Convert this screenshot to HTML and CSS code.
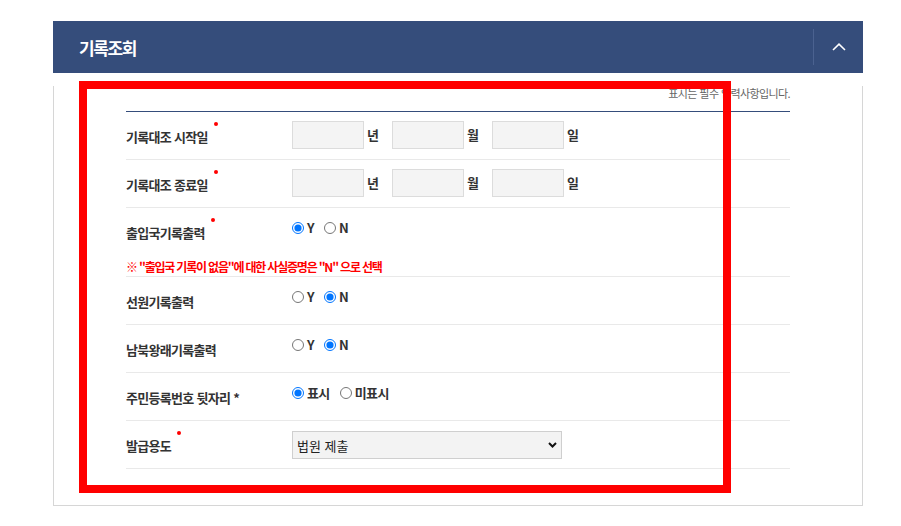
FILE: index.html
```html
<!DOCTYPE html>
<html lang="ko">
<head>
    <meta charset="UTF-8">
    <meta name="viewport" content="width=device-width, initial-scale=1.0">
    <title>기록조회</title>
    <link rel="stylesheet" href="styles.css">
</head>
<body>
    <div class="panel">
        <div class="panel-head">
            <h2>기록조회</h2>
            <button class="toggle" type="button">
                <svg width="14" height="8" viewBox="0 0 14 8"><polyline points="1,7 7,1.2 13,7" fill="none" stroke="#fff" stroke-width="1.6"/></svg>
            </button>
        </div>

        <div class="panel-body">
            <p class="guide">표시는 필수 입력사항입니다.</p>

            <div class="form">
                <div class="row">
                    <div class="label">기록대조 시작일<span class="req"></span></div>
                    <div class="value date">
                        <input type="text"><span class="unit">년</span>
                        <input type="text"><span class="unit">월</span>
                        <input type="text"><span class="unit">일</span>
                    </div>
                </div>
                <div class="row">
                    <div class="label">기록대조 종료일<span class="req"></span></div>
                    <div class="value date">
                        <input type="text"><span class="unit">년</span>
                        <input type="text"><span class="unit">월</span>
                        <input type="text"><span class="unit">일</span>
                    </div>
                </div>
                <div class="row row-note">
                    <div class="line">
                        <div class="label">출입국기록출력<span class="req"></span></div>
                        <div class="value choice">
                            <label><input type="radio" name="immi" checked>Y</label>
                            <label><input type="radio" name="immi">N</label>
                        </div>
                    </div>
                    <p class="note">※ "출입국 기록이 없음"에 대한 사실증명은 "N" 으로 선택</p>
                </div>
                <div class="row">
                    <div class="label">선원기록출력</div>
                    <div class="value choice">
                        <label><input type="radio" name="crew">Y</label>
                        <label><input type="radio" name="crew" checked>N</label>
                    </div>
                </div>
                <div class="row">
                    <div class="label">남북왕래기록출력</div>
                    <div class="value choice">
                        <label><input type="radio" name="nk">Y</label>
                        <label><input type="radio" name="nk" checked>N</label>
                    </div>
                </div>
                <div class="row">
                    <div class="label">주민등록번호 뒷자리 *</div>
                    <div class="value choice">
                        <label><input type="radio" name="rrn" checked>표시</label>
                        <label><input type="radio" name="rrn">미표시</label>
                    </div>
                </div>
                <div class="row">
                    <div class="label">발급용도<span class="req"></span></div>
                    <div class="value select-wrap">
                        <select>
                            <option>법원 제출</option>
                        </select>
                        <svg class="arrow" width="9" height="6" viewBox="0 0 9 6"><polyline points="1,1 4.5,4.5 8,1" fill="none" stroke="#111" stroke-width="2"/></svg>
                    </div>
                </div>
            </div>
        </div>
    </div>

    <!-- annotation box -->
    <div class="highlight"></div>
</body>
</html>
```

FILE: styles.css
```css
body {
    margin: 0;
    background-color: #fff;
    font-family: "Noto Sans CJK KR", "Noto Sans", sans-serif;
    color: #333;
}
.panel {
    width: 810px;
    margin: 21px 0 0 53px;
}
.panel-head {
    display: flex;
    align-items: center;
    justify-content: space-between;
    height: 52px;
    padding-left: 26px;
    background-color: #354d7b;
}
.panel-head h2 {
    margin: 0;
    font-size: 17px;
    font-weight: bold;
    letter-spacing: -1.4px;
    color: #fff;
}
.toggle {
    display: flex;
    align-items: center;
    justify-content: center;
    width: 50px;
    height: 36px;
    padding: 0;
    border: none;
    border-left: 1px solid #4b6290;
    background: none;
}
.panel-body {
    border: 1px solid #d6d6d6;
    border-top: none;
    padding: 0 72px 36px 72px;
}
.guide {
    margin: 13px 0 11px;
    font-size: 11px;
    line-height: 14px;
    letter-spacing: -0.6px;
    text-align: right;
    color: #666;
}
.form {
    border-top: 1px solid #354d7b;
}
.row {
    display: flex;
    min-height: 47px;
    border-bottom: 1px solid #e9e9e9;
}
.row-note {
    flex-direction: column;
    min-height: 68px;
}
.row-note .line {
    display: flex;
    height: 47px;
}
.label {
    width: 166px;
    padding-top: 16px;
    font-size: 13px;
    line-height: 18px;
    font-weight: bold;
    letter-spacing: -0.7px;
    color: #333;
}
.req {
    display: inline-block;
    width: 4px;
    height: 4px;
    margin-left: 6px;
    border-radius: 50%;
    background-color: #f00;
    position: relative;
    top: -16px;
}
.value {
    display: flex;
    align-items: center;
}
.date {
    align-items: flex-start;
    padding-top: 9px;
}
.date input {
    width: 72px;
    height: 28px;
    box-sizing: border-box;
    margin: 0;
    border: 1px solid #dcdcdc;
    background-color: #f4f4f4;
}
.unit {
    margin: 0 13px 0 3px;
    font-size: 13px;
    line-height: 28px;
    font-weight: bold;
    color: #333;
}
.choice {
    align-items: flex-start;
    padding-top: 11px;
}
.choice label {
    display: flex;
    align-items: center;
    margin-right: 10px;
    font-size: 13px;
    line-height: 18px;
    font-weight: bold;
    letter-spacing: -0.6px;
    color: #333;
}
.choice input {
    width: 12px;
    height: 12px;
    margin: 0 3px 0 0;
}
.note {
    margin: 0;
    padding-top: 4px;
    font-size: 12px;
    line-height: 16px;
    font-weight: bold;
    letter-spacing: -1.2px;
    color: #f00;
}
.select-wrap {
    align-items: flex-start;
    padding-top: 10px;
    position: relative;
}
.select-wrap select {
    -webkit-appearance: none;
    appearance: none;
    width: 270px;
    height: 28px;
    padding: 0 4px;
    border: 1px solid #cfcfcf;
    background-color: #f3f3f3;
    font-family: inherit;
    font-size: 13px;
    color: #222;
}
.select-wrap .arrow {
    position: absolute;
    left: 256px;
    top: 21px;
}

/* red annotation frame */
.highlight {
    position: absolute;
    left: 79px;
    top: 81px;
    width: 652px;
    height: 412px;
    box-sizing: border-box;
    border: 8px solid #f00;
}
```
